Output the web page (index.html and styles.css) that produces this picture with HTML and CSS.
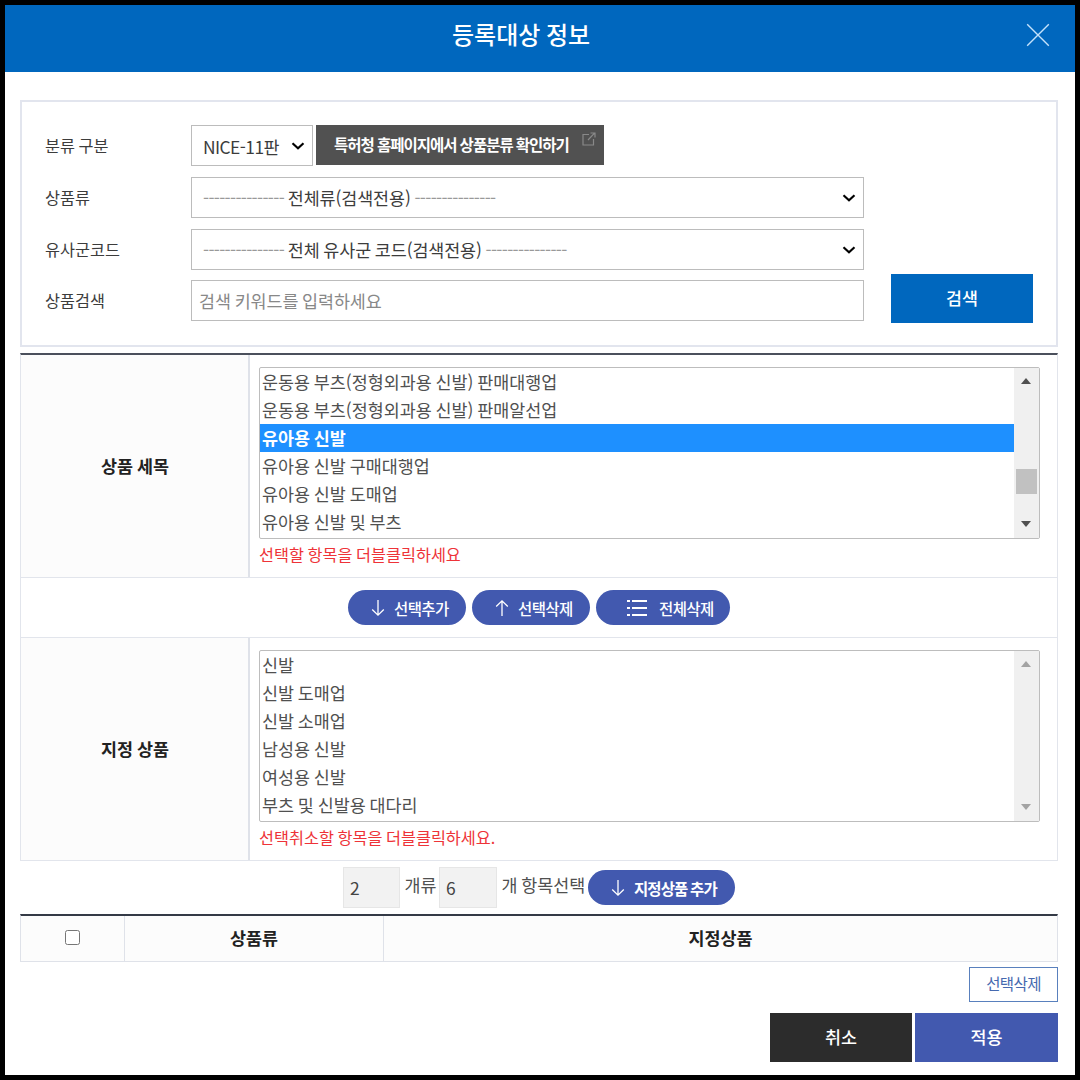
FILE: index.html
```html
<!DOCTYPE html>
<html lang="ko">
<head>
<meta charset="utf-8">
<title>등록대상 정보</title>
<link rel="stylesheet" href="styles.css">
</head>
<body>
<div class="dialog">
  <header class="titlebar">
    <h1>등록대상 정보</h1>
    <svg class="close" viewBox="0 0 24 24"><path d="M1.2 1.2L22.8 22.8M22.8 1.2L1.2 22.8"/></svg>
  </header>
  <main class="content">
    <section class="search">
      <div class="fields">
        <div class="field">
          <span class="label">분류 구분</span>
          <div class="select short"><span class="nice">NICE-11판</span><svg class="chevron" viewBox="0 0 14 8"><path d="M1.5 1.3L7 6.2L12.5 1.3"/></svg></div>
          <div class="homepage"><span>특허청 홈페이지에서 상품분류 확인하기</span>
            <svg class="external" viewBox="0 0 14 14"><path d="M7 2.5H1V13H11.5V7M6 8L12.5 1.2M8.5 1H13V5.5"/></svg></div>
        </div>
        <div class="field">
          <span class="label">상품류</span>
          <div class="select"><span><i class="dash">---------------</i> 전체류(검색전용) <i class="dash">---------------</i></span><svg class="chevron" viewBox="0 0 14 8"><path d="M1.5 1.3L7 6.2L12.5 1.3"/></svg></div>
        </div>
        <div class="field">
          <span class="label">유사군코드</span>
          <div class="select"><span><i class="dash">---------------</i> 전체 유사군 코드(검색전용) <i class="dash">---------------</i></span><svg class="chevron" viewBox="0 0 14 8"><path d="M1.5 1.3L7 6.2L12.5 1.3"/></svg></div>
        </div>
        <div class="field">
          <span class="label">상품검색</span>
          <input class="keyword" placeholder="검색 키워드를 입력하세요">
        </div>
      </div>
      <button class="search-btn">검색</button>
    </section>

    <section class="goods">
      <div class="row">
        <div class="head">상품 세목</div>
        <div class="cell">
          <div class="listbox">
            <ul>
              <li>운동용 부츠(정형외과용 신발) 판매대행업</li>
              <li>운동용 부츠(정형외과용 신발) 판매알선업</li>
              <li class="selected">유아용 신발</li>
              <li>유아용 신발 구매대행업</li>
              <li>유아용 신발 도매업</li>
              <li>유아용 신발 및 부츠</li>
            </ul>
            <div class="scroll"><b class="up"></b><b class="thumb"></b><b class="down"></b></div>
          </div>
          <p class="hint">선택할 항목을 더블클릭하세요</p>
        </div>
      </div>
      <div class="actions">
        <button class="pill"><svg class="arrow" viewBox="0 0 14 18"><path d="M7 1V16M1.2 10.5L7 16.2L12.8 10.5"/></svg>선택추가</button>
        <button class="pill"><svg class="arrow" viewBox="0 0 14 18"><path d="M7 17V2M1.2 7.5L7 1.8L12.8 7.5"/></svg>선택삭제</button>
        <button class="pill wide"><svg class="list" viewBox="0 0 20 18"><path d="M0 2H3M0 9H3M0 16H3M5 2H20M5 9H20M5 16H20"/></svg>전체삭제</button>
      </div>
      <div class="row">
        <div class="head">지정 상품</div>
        <div class="cell">
          <div class="listbox">
            <ul>
              <li>신발</li>
              <li>신발 도매업</li>
              <li>신발 소매업</li>
              <li>남성용 신발</li>
              <li>여성용 신발</li>
              <li>부츠 및 신발용 대다리</li>
            </ul>
            <div class="scroll off"><b class="up"></b><b class="down"></b></div>
          </div>
          <p class="hint">선택취소할 항목을 더블클릭하세요.</p>
        </div>
      </div>
    </section>

    <div class="counts">
      <input class="count" value="2" readonly>
      <span class="unit">개류</span>
      <input class="count second" value="6" readonly>
      <span class="unit">개 항목선택</span>
      <button class="pill add"><svg class="arrow" viewBox="0 0 14 18"><path d="M7 1V16M1.2 10.5L7 16.2L12.8 10.5"/></svg>지정상품 추가</button>
    </div>

    <section class="result">
      <div><input type="checkbox" class="check"></div>
      <div>상품류</div>
      <div>지정상품</div>
    </section>
    <button class="remove">선택삭제</button>
    <footer class="buttons">
      <button class="cancel">취소</button>
      <button class="apply">적용</button>
    </footer>
  </main>
</div>
</body>
</html>
```
FILE: styles.css
```css
* { box-sizing: border-box; }
body { margin: 0; background: #000; }
body, button, input { font-family: "Noto Sans CJK KR", sans-serif; font-size: 17.4px; word-spacing: -1px; }
button { border: 0; padding: 0 0 3px; margin: 0; }
svg { fill: none; flex: none; }

.dialog { width: 1080px; height: 1080px; border: 5px solid #000; background: #fff; color: #3c3c3c; }
.titlebar { height: 67px; background: #0067be; display: flex; align-items: center; justify-content: space-between; padding: 0 25px 7px 447px; }
.titlebar h1 { margin: 0; padding-bottom: 2px; font-size: 24px; line-height: 36px; font-weight: 500; color: #fff; }
.close { width: 24px; height: 24px; stroke: #c4e2fb; stroke-width: 1.4; }
.content { padding: 28px 17px 0 15px; display: flex; flex-direction: column; }

.search { height: 247px; border: 2px solid #e2e5ee; padding: 23px 23px 0; display: flex; gap: 27px; }
.fields { display: grid; grid-template-rows: repeat(4, 41px); row-gap: 10.8px; width: 819px; }
.field { display: flex; align-items: stretch; }
.label { width: 146px; font-size: 16.3px; line-height: 40px; }
.select { flex: 1; border: 1px solid #bcbcbc; display: flex; align-items: center; justify-content: space-between; padding: 1px 7px 0 11px; color: #3c3c3c; letter-spacing: -.1px; white-space: pre; }
.short { flex: none; width: 122px; margin-right: 3px; }
.nice { letter-spacing: -.55px; padding-top: 1px; }
.chevron { width: 14px; height: 8px; stroke: #000; stroke-width: 2.2; }
.dash { font-style: normal; color: #999; letter-spacing: -.65px; }
.homepage { width: 288px; height: 40px; background: #515151; color: #fff; font-size: 15.5px; font-weight: 700; letter-spacing: -1px; line-height: 39px; padding-left: 18px; display: flex; gap: 13px; white-space: nowrap; }
.homepage span { word-spacing: -.2px; }
.external { width: 14px; height: 14px; margin-top: 7px; stroke: #898989; stroke-width: 1.2; }
.keyword { flex: 1; border: 1px solid #bcbcbc; padding: 0 7px; outline: 0; }
.keyword::placeholder { color: #888; opacity: 1; letter-spacing: -.08px; }
.search-btn { width: 142px; height: 49px; margin-top: 149px; background: #0067be; color: #fff; font-weight: 500; }

.goods { margin-top: 6px; border: 1px solid #e2e5ec; border-top: 2px solid #4b505c; }
.row { display: flex; height: 222px; }
.head { width: 229px; border-right: 2px solid #dfe2e9; background: #fcfcfc; color: #222; font-weight: 700; display: flex; align-items: center; justify-content: center; padding: 0 0 1px 1px; }
.cell { flex: 1; padding: 12px 17px 0 9px; }
.listbox { height: 172px; border: 1px solid #bdbdbd; border-radius: 2px; display: flex; color: #505050; overflow: hidden; }
.listbox ul { flex: 1; margin: 0; padding: 0; list-style: none; }
.listbox li { height: 28.1px; line-height: 27px; padding-left: 2px; }
.listbox .selected { background: #1e90ff; color: #fff; font-weight: 700; }
.scroll { width: 25px; background: #f0f0f0; display: flex; flex-direction: column; align-items: center; padding: 10px 1px 11px 0; }
.up { border: 5.5px solid transparent; border-top: 0; border-bottom: 6px solid #505050; }
.down { border: 5.5px solid transparent; border-bottom: 0; border-top: 6px solid #505050; margin-top: auto; }
.thumb { width: 21px; height: 25px; background: #c1c1c1; margin-top: 85px; }
.off .up { border-bottom-color: #a3a3a3; }
.off .down { border-top-color: #a3a3a3; }
.hint { margin: 3px 0 0; font-size: 16.3px; line-height: 25px; color: #ee3338; }

.actions { height: 61px; border: solid #e2e5ec; border-width: 1px 0; display: flex; align-items: center; justify-content: center; gap: 6px; }
.pill { width: 118px; height: 35px; border-radius: 18px; background: #4259af; color: #fff; font-size: 15.5px; font-weight: 500; letter-spacing: -.6px; display: flex; align-items: center; padding: 0 0 0 23px; }
.arrow { width: 14px; height: 18px; stroke: #fff; stroke-width: 1.3; margin-right: 9px; }
.wide { width: 134px; padding-left: 31px; }
.list { width: 20px; height: 18px; stroke: #fff; stroke-width: 2; margin-right: 12px; }

.counts { height: 53px; padding: 6px 0 0 323px; display: flex; align-items: flex-start; }
.count { width: 57px; height: 41px; border: 1px solid #e6e6e6; background: #f2f2f2; padding: 0 6px; color: #444; }
.second { width: 58px; }
.unit { line-height: 36px; color: #505050; padding: 0 2.5px 0 4.5px; white-space: nowrap; }
.add { width: 147px; margin-top: 3px; font-weight: 700; letter-spacing: -.85px; }

.result { height: 48px; border: 1px solid #dfe2e9; border-top: 2px solid #343a46; background: #fcfcfc; color: #222; font-weight: 700; display: grid; grid-template-columns: 104px 259px 1fr; }
.result > div { display: flex; align-items: center; justify-content: center; border-right: 1px solid #dfe2e9; padding-bottom: 2px; }
.result > div:last-child { border-right: 0; }
.check { width: 15px; height: 15px; margin: 0; }
.remove { align-self: flex-end; width: 89px; height: 35px; margin-top: 5px; border: 1px solid #5980bd; background: #fff; color: #4669af; font-size: 15.5px; letter-spacing: -.6px; }
.buttons { display: flex; justify-content: flex-end; gap: 3px; margin-top: 11px; }
.buttons button { width: 142px; height: 49px; color: #fff; font-weight: 500; }
.buttons .cancel { background: #2c2c2c; }
.buttons .apply { width: 143px; background: #4259af; }
```
